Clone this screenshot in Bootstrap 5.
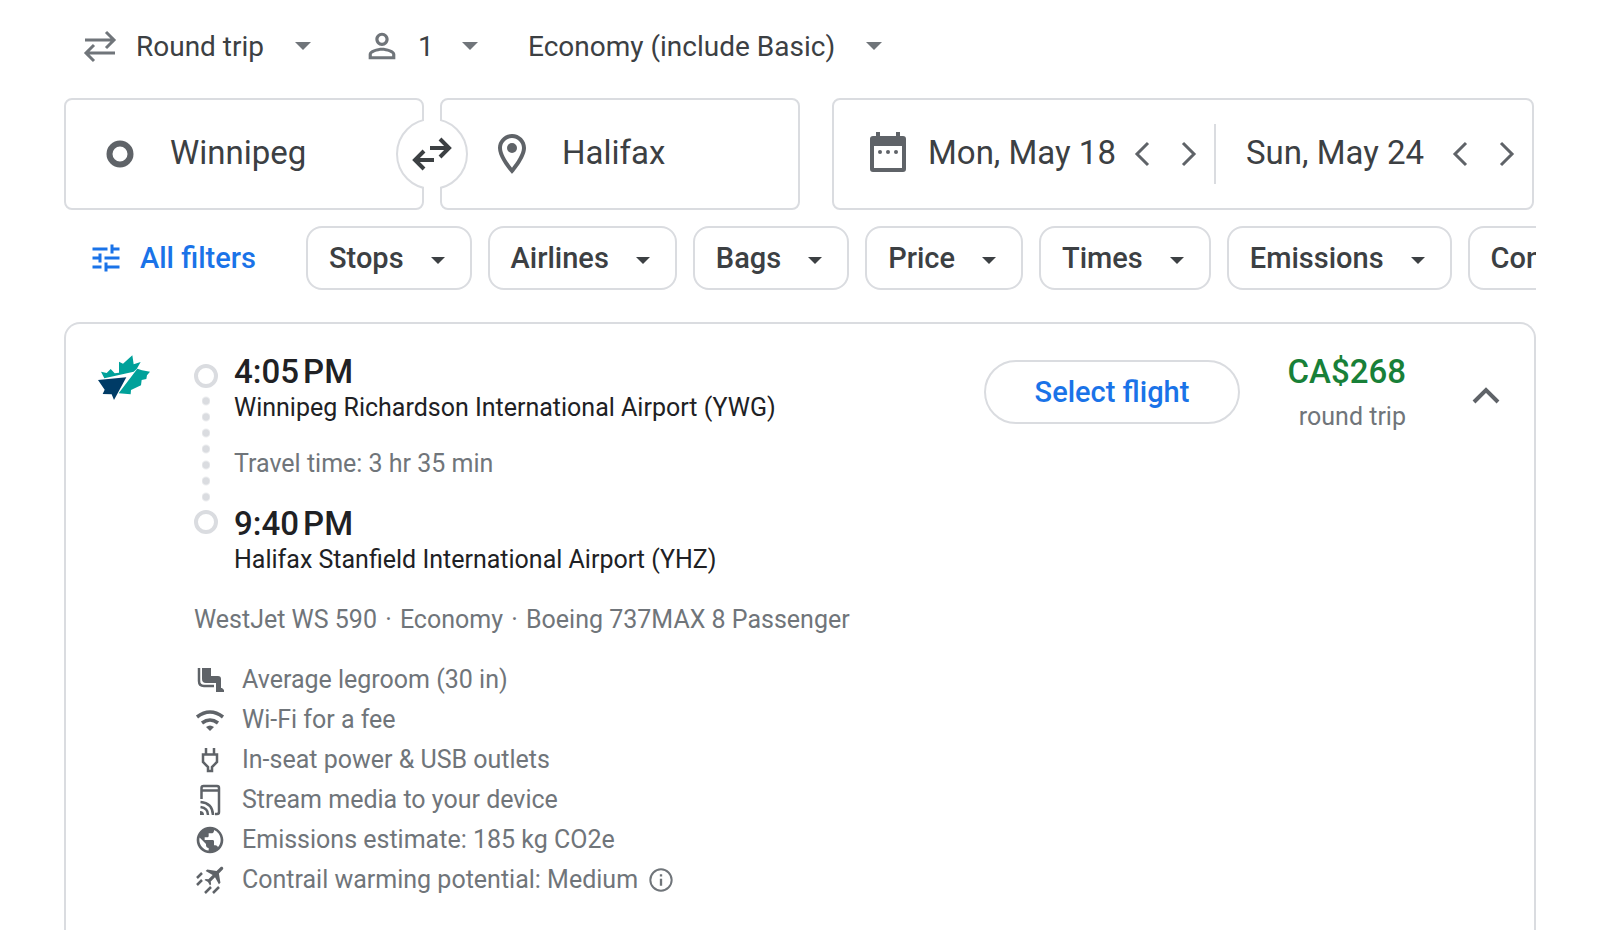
<!DOCTYPE html>
<html lang="en">
<head>
<meta charset="utf-8">
<meta name="viewport" content="width=device-width, initial-scale=1">
<title>Flights: Winnipeg to Halifax</title>
<link href="https://cdn.jsdelivr.net/npm/bootstrap@5.3.0/dist/css/bootstrap.min.css" rel="stylesheet">
<style>
  :root { --line: #dadce0; --ink: #3c4043; --muted: #70757a; --icon: #5f6368; --link: #1a73e8; }
  body { font-family: Roboto, "Liberation Sans", sans-serif; color: #202124; background: #fff; }
  svg { display: block; flex: none; }
  .page { padding: 16px 64px 0; }

  .trip-options { height: 60px; margin-bottom: 22px; padding-left: 18px; gap: 18px; color: var(--muted); }
  .trip-options .form-select {
    width: auto; border: 0; padding: 2px 46px 0 0; font-size: 28px; line-height: 40px; color: var(--ink);
    background-position: right center; background-size: 16px 8px;
    --bs-form-select-bg-img: url("data:image/svg+xml,%3csvg xmlns='http://www.w3.org/2000/svg' viewBox='0 0 16 8'%3e%3cpath fill='%2370757a' d='M0 0h16L8 8z'/%3e%3c/svg%3e");
  }
  .passengers { margin: 0 32px 0 33px; gap: 16px; }
  .passengers .form-select { padding-right: 44px; }

  .field { height: 112px; border: 2px solid var(--line); border-radius: 8px; color: var(--icon); }
  .field input { border: 0; padding: 0 0 2px; min-width: 0; outline: 0; background: transparent; font-size: 33px; line-height: 40px; color: var(--ink); }
  .route { display: grid; grid-template-columns: minmax(0, 1fr) minmax(0, 1fr); flex: 736 1 0; gap: 16px; }
  .route .field { padding-left: 30px; gap: 26px; }
  .route .destination { padding-left: 46px; }
  .dates { flex: 698 1 0; margin-right: 2px; }
  .dates .departing { flex: none; width: 380px; padding-left: 30px; }
  .dates .returning { flex: 1 1 0; min-width: 0; padding-left: 30px; }
  .dates input { width: 190px; }
  .departing-icon { margin-right: 16px; }
  .divide { width: 2px; height: 60px; background: var(--line); }
  .step { border: 0; padding: 0; background: transparent; color: var(--icon); width: 47px; height: 48px; display: grid; place-items: center; }

  .swap-slot { top: 0; bottom: 0; left: 50%; width: 72px; margin-left: -36px; }
  .swap-slot::after { content: ""; position: absolute; z-index: 1; top: 0; bottom: 0; left: 28px; width: 16px; background: #fff; }
  .swap { display: grid; place-items: center; width: 72px; height: 72px; border: 2px solid var(--line); border-radius: 50%; background: #fff; color: var(--ink); padding: 0; }
  .swap svg { position: relative; z-index: 2; }

  .filters { margin-top: 16px; gap: 16px; overflow: hidden; }
  .filters .btn { --bs-btn-font-size: 29px; --bs-btn-font-weight: 500; --bs-btn-line-height: 40px; flex: none; height: 64px; }
  .chip.btn { --bs-btn-border-width: 2px; --bs-btn-border-color: var(--line); --bs-btn-border-radius: 16px; --bs-btn-color: var(--ink); padding: 10px 25px 10px 21px; }
  .chip.dropdown-toggle::after { margin-left: 27px; vertical-align: 4px; border-top: 7px solid; border-right: 7px solid transparent; border-left: 7px solid transparent; }
  .all-filters.btn { --bs-btn-color: var(--link); --bs-btn-border-width: 0; --bs-btn-padding-x: 24px; width: 226px; gap: 16px; }

  .flight { margin-top: 32px; border: 2px solid var(--line); border-bottom: 0; border-radius: 16px 16px 0 0; padding: 27px 32px 24px; }
  .airline { width: 96px; padding-top: 4px; }
  .timeline { gap: 16px; }
  .track { width: 24px; padding: 13px 0 42px; }
  .stop-ring { width: 24px; height: 24px; border: 4px solid var(--line); border-radius: 50%; flex: none; }
  .stop-dots { flex: 1; width: 8px; margin: 5px 0 6px; background: radial-gradient(circle, var(--line) 0 3px, transparent 5px) top / 8px 16px repeat-y; }
  .clock { font-size: 33px; line-height: 41px; font-weight: 500; }
  .copy { font-size: 25px; line-height: 32px; }
  .soft { color: var(--muted); }
  .duration { margin: 24px 0 23px; }
  .service { margin: 28px 0 24px; }
  .service span { margin: 0 2px; }
  .amenities li { gap: 16px; font-size: 25px; line-height: 40px; }
  .amenities li > svg { color: var(--icon); }
  .info { border: 0; padding: 0; background: transparent; color: var(--muted); margin-left: -7px; }
  .select-flight.btn { --bs-btn-color: var(--link); --bs-btn-border-color: var(--line); --bs-btn-border-width: 2px; --bs-btn-border-radius: 32px; --bs-btn-font-size: 29px; --bs-btn-font-weight: 500; --bs-btn-line-height: 40px; width: 256px; height: 64px; margin-top: 9px; }
  .fare { width: 166px; }
  .price { color: #188038; }
  .fare .copy { margin-top: 9px; }
  .collapse-toggle { width: 40px; height: 40px; margin: 25px -4px 0 60px; border: 0; padding: 0; background: transparent; color: var(--icon); }
</style>
</head>
<body>
<main class="page min-vh-100 d-flex flex-column">
  <form class="trip-options d-flex align-items-center" aria-label="Trip options">
    <svg width="36" height="36" viewBox="0 0 36 36" fill="none" stroke="currentColor" stroke-width="3"><path d="M3 12h29M24 4l8 8-8 8M33 25H4M12 17l-8 8 8 8" /></svg>
    <select id="trip" class="form-select" aria-label="Trip type"><option>Round trip</option></select>
    <div class="passengers d-flex align-items-center">
      <svg width="40" height="40" viewBox="0 0 24 24" fill="currentColor"><path d="M12 5.9c1.16 0 2.1.94 2.1 2.1s-.94 2.1-2.1 2.1S9.900 9.160 9.900 8s.94-2.100 2.100-2.100m0 9c2.970 0 6.100 1.460 6.100 2.100v1.100H5.900V17c0-.64 3.130-2.100 6.100-2.100M12 4C9.790 4 8 5.790 8 8s1.790 4 4 4 4-1.790 4-4-1.790-4-4-4zm0 9c-2.670 0-8 1.340-8 4v3h16v-3c0-2.660-5.330-4-8-4z"/></svg>
      <select id="pax" class="form-select" aria-label="Passengers"><option>1</option></select>
    </div>
    <select id="cabin" class="form-select" aria-label="Cabin"><option>Economy (include Basic)</option></select>
  </form>

  <form class="d-flex" aria-label="Route and dates">
    <div class="route position-relative me-3">
      <div class="field d-flex align-items-center">
        <svg width="48" height="48" viewBox="0 0 48 48" fill="none" stroke="currentColor" stroke-width="6"><circle cx="24" cy="24" r="10.500"/></svg>
        <input class="w-50" type="text" value="Winnipeg" aria-label="Where from?">
      </div>
      <div class="field destination d-flex align-items-center">
        <svg width="48" height="48" viewBox="0 0 24 24" fill="currentColor"><path fill-rule="evenodd" d="M12 2C8.130 2 5 5.130 5 9c0 5.250 7 13 7 13s7-7.750 7-13c0-3.870-3.130-7-7-7zM7 9c0-2.760 2.240-5 5-5s5 2.240 5 5c0 2.880-2.880 7.190-5 9.880C9.920 16.210 7 11.850 7 9z"/><circle cx="12" cy="9" r="2.500"/></svg>
        <input class="w-50" type="text" value="Halifax" aria-label="Where to?">
      </div>
      <div class="swap-slot position-absolute d-flex align-items-center">
        <button class="swap" type="button" aria-label="Swap origin and destination">
          <svg width="40" height="36" viewBox="0 0 40 36" fill="none" stroke="currentColor" stroke-width="4"><path d="M18 12h18M28 3l9 9-9 9M22 24H4M12 15l-9 9 9 9"/></svg>
        </button>
      </div>
    </div>
    <div class="dates field d-flex align-items-center ms-3">
      <div class="departing d-flex align-items-center">
        <svg class="departing-icon" width="48" height="48" viewBox="0 1 24 24" fill="currentColor"><path fill-rule="evenodd" d="M6 2h2v2h8V2h2v2h1.500A1.500 1.500 0 0 1 21 5.500v15a1.500 1.500 0 0 1-1.500 1.500h-15A1.500 1.500 0 0 1 3 20.500v-15A1.500 1.500 0 0 1 4.500 4H6zM5 9v11h14V9z"/><circle cx="8" cy="12" r="1"/><circle cx="12" cy="12" r="1"/><circle cx="16" cy="12" r="1"/></svg>
        <input type="text" value="Mon, May 18" aria-label="Departure">
        <button class="step" type="button" aria-label="Earlier departure"><svg width="16" height="28" viewBox="0 0 16 28" fill="none" stroke="currentColor" stroke-width="3"><path d="M14 3 3 14l11 11"/></svg></button>
        <button class="step" type="button" aria-label="Later departure"><svg width="16" height="28" viewBox="0 0 16 28" fill="none" stroke="currentColor" stroke-width="3"><path d="m2 3 11 11L2 25"/></svg></button>
      </div>
      <div class="divide"></div>
      <div class="returning d-flex align-items-center">
        <input type="text" value="Sun, May 24" aria-label="Return">
        <button class="step" type="button" aria-label="Earlier return"><svg width="16" height="28" viewBox="0 0 16 28" fill="none" stroke="currentColor" stroke-width="3"><path d="M14 3 3 14l11 11"/></svg></button>
        <button class="step" type="button" aria-label="Later return"><svg width="16" height="28" viewBox="0 0 16 28" fill="none" stroke="currentColor" stroke-width="3"><path d="m2 3 11 11L2 25"/></svg></button>
      </div>
    </div>
  </form>

  <div class="filters d-flex" role="group" aria-label="Filters">
    <button type="button" class="btn all-filters d-flex align-items-center"><svg width="36" height="36" viewBox="0 0 24 24" fill="currentColor"><path d="M3 17v2h6v-2H3zM3 5v2h10V5H3zm10 16v-2h8v-2h-8v-2h-2v6h2zM7 9v2H3v2h4v2h2V9H7zm14 4v-2H11v2h10zm-6-4h2V7h4V5h-4V3h-2v6z"/></svg>All filters</button>
    <button type="button" class="btn chip dropdown-toggle">Stops</button>
    <button type="button" class="btn chip dropdown-toggle">Airlines</button>
    <button type="button" class="btn chip dropdown-toggle">Bags</button>
    <button type="button" class="btn chip dropdown-toggle">Price</button>
    <button type="button" class="btn chip dropdown-toggle">Times</button>
    <button type="button" class="btn chip dropdown-toggle">Emissions</button>
    <button type="button" class="btn chip dropdown-toggle">Connecting airports</button>
  </div>

  <article class="flight flex-grow-1 d-flex align-items-start">
    <div class="airline">
      <svg width="52" height="46" viewBox="144 435 156 138" role="img" aria-label="WestJet"><path fill="#00a19a" d="m163 505-10-20 17 4 12-12 12 13 13-2 0-33 12 6 28-25 4 27 21-7-12 21-9 8zM262 476l14 5 24 4-9 11-2 11-14 3-2 16-30 14-1 13-36-3z"/><path fill="#003b66" d="m144 510 85-8-37 68-7-17-27-1 6-13z"/></svg>
    </div>
    <div class="flex-grow-1">
      <div class="timeline d-flex">
        <div class="track d-flex flex-column align-items-center"><span class="stop-ring"></span><span class="stop-dots"></span><span class="stop-ring"></span></div>
        <div>
          <div class="clock">4:05&#8239;PM</div>
          <div class="copy">Winnipeg Richardson International Airport (YWG)</div>
          <div class="copy soft duration">Travel time: 3 hr 35 min</div>
          <div class="clock">9:40&#8239;PM</div>
          <div class="copy">Halifax Stanfield International Airport (YHZ)</div>
        </div>
      </div>
      <p class="copy soft service">WestJet WS 590 <span>·</span> Economy <span>·</span> Boeing 737MAX 8 Passenger</p>
      <ul class="amenities soft list-unstyled m-0">
        <li class="d-flex align-items-center"><svg width="32" height="32" viewBox="0 0 32 32" fill="none" stroke="currentColor" stroke-width="3"><path d="M5 4v13q0 5 5 5h10" stroke-width="2.500"/><path fill="currentColor" stroke="none" d="M8 4h9v8h7q3 0 3 3v9h1l2 2v2h-8v-9H12q-4 0-4-4z"/></svg>Average legroom (30 in)</li>
        <li class="d-flex align-items-center"><svg width="32" height="32" viewBox="0 0 32 32" fill="none" stroke="currentColor" stroke-width="3.500"><path d="M3 13q13-10 26 0M8 19q8-6 16 0"/><path fill="currentColor" stroke="none" d="M12 23q4-3 8 0l-4 4z"/></svg>Wi-Fi for a fee</li>
        <li class="d-flex align-items-center"><svg width="32" height="32" viewBox="0 0 32 32" fill="none" stroke="currentColor" stroke-width="2.500"><path d="M12 4v6M20 4v6M9 10.500h14V18l-5 5v4h-4v-4l-5-5z"/></svg>In-seat power &amp; USB outlets</li>
        <li class="d-flex align-items-center"><svg width="32" height="32" viewBox="0 0 32 32" fill="none" stroke="currentColor" stroke-width="2.500"><path d="M7.500 15V4q0-2 2-2H23q2 0 2 2v24q0 2-2 2h-2M7 6.500h18"/><path d="M6.500 18q12 1 12.500 13M6.500 23q7.500 1 7.500 8"/><path fill="currentColor" stroke="none" d="M6 27q4 0 4 4H6z"/></svg>Stream media to your device</li>
        <li class="d-flex align-items-center"><svg width="32" height="32" viewBox="0 0 24 24" fill="currentColor"><path d="M12 2C6.480 2 2 6.480 2 12s4.480 10 10 10 10-4.480 10-10S17.520 2 12 2zm-1 17.930c-3.950-.49-7-3.850-7-7.930 0-.62.080-1.210.210-1.790L9 15v1c0 1.100.9 2 2 2v1.930zm6.900-2.540c-.26-.81-1-1.390-1.900-1.390h-1v-3c0-.55-.45-1-1-1H8v-2h2c.55 0 1-.45 1-1V7h2c1.100 0 2-.9 2-2v-.41c2.930 1.190 5 4.060 5 7.410 0 2.080-.8 3.970-2.100 5.390z"/></svg>Emissions estimate: 185 kg CO2e</li>
        <li class="d-flex align-items-center"><svg width="32" height="32" viewBox="0 0 32 32" fill="currentColor"><path transform="translate(21 11) rotate(45) scale(1.100) translate(-11.500 -12)" d="M20 15.500v-2l-7-5V3.500c0-.83-.67-1.500-1.500-1.500S10 2.670 10 3.500V8.500l-7 5v2l7-2V19l-2 1.500V22l3.500-1 3.500 1v-1.500L13 19v-5.500z"/><path fill="none" stroke="currentColor" stroke-width="2.500" d="m8 9-5 5M8 16l-5 5M17 23l-6 6M25 23l-6 6"/></svg>Contrail warming potential: Medium
          <button class="info" type="button" aria-label="About contrail warming"><svg width="28" height="28" viewBox="0 0 24 24" fill="currentColor"><path d="M11 17h2v-6h-2v6zm1-15C6.480 2 2 6.480 2 12s4.480 10 10 10 10-4.480 10-10S17.520 2 12 2zm0 18.300a8.300 8.300 0 1 1 0-16.600 8.300 8.300 0 0 1 0 16.600zM11 9h2V7h-2v2z"/></svg></button></li>
      </ul>
    </div>
    <button type="button" class="btn select-flight">Select flight</button>
    <div class="fare text-end">
      <div class="clock price">CA$268</div>
      <div class="copy soft">round trip</div>
    </div>
    <button type="button" class="collapse-toggle" aria-label="Hide flight details" aria-expanded="true"><svg width="40" height="40" viewBox="0 0 40 40" fill="none" stroke="currentColor" stroke-width="4"><path d="m8 26 12-12 12 12"/></svg></button>
  </article>
</main>
<script src="https://cdn.jsdelivr.net/npm/bootstrap@5.3.0/dist/js/bootstrap.bundle.min.js"></script>
</body>
</html>
